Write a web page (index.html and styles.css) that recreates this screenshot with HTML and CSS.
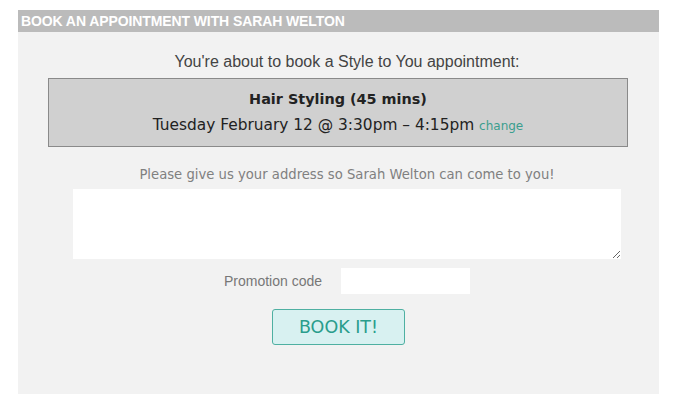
FILE: index.html
```html
<!DOCTYPE html>
<html>
<head>
<meta charset="utf-8">
<link rel="stylesheet" href="styles.css">
</head>
<body>
<div class="panel">
  <div class="header">BOOK AN APPOINTMENT WITH SARAH WELTON</div>
  <div class="content">
    <p class="intro">You're about to book a Style to You appointment:</p>
    <div class="summary">
      <div class="service">Hair Styling (45 mins)</div>
      <div class="when">Tuesday February 12 @ 3:30pm – 4:15pm <a class="change" href="#">change</a></div>
    </div>
    <p class="address-label">Please give us your address so Sarah Welton can come to you!</p>
    <textarea class="address"></textarea>
    <div class="promo">
      <label class="promo-label">Promotion code</label>
      <input class="promo-input" type="text">
    </div>
    <button class="book">BOOK IT!</button>
  </div>
</div>
</body>
</html>
```
FILE: styles.css
```css
html, body {
  margin: 0;
  padding: 0;
  background: #ffffff;
}
body {
  padding: 10px 0 0 18px;
}
.panel {
  width: 641px;
  background: #f2f2f2;
}
.header {
  height: 22px;
  line-height: 22px;
  background: #bbbbbb;
  color: #ffffff;
  font-family: "Liberation Sans", Arial, sans-serif;
  font-weight: bold;
  font-size: 14px;
  letter-spacing: -0.1px;
  padding-left: 3px;
}
.content {
  display: flex;
  flex-direction: column;
  align-items: center;
  padding: 20px 0 49px;
}
.intro {
  margin: 0;
  padding-left: 17px;
  font-family: "Liberation Sans", Arial, sans-serif;
  font-size: 16px;
  line-height: 20px;
  color: #444444;
}
.summary {
  margin-top: 6px;
  width: 578px;
  margin-left: -1px;
  background: #d0d0d0;
  border: 1px solid #8a8a8a;
  padding: 9px 0;
  text-align: center;
  font-family: "DejaVu Sans", sans-serif;
  color: #222222;
}
.service {
  font-weight: bold;
  font-size: 14.4px;
  line-height: 22px;
  margin-bottom: 4px;
}
.when {
  font-size: 15.4px;
  line-height: 22px;
}
.change {
  color: #3a9e8e;
  font-size: 12px;
  text-decoration: none;
}
.address-label {
  margin: 19px 0 0;
  padding-left: 17px;
  font-family: "DejaVu Sans", sans-serif;
  font-size: 13.2px;
  line-height: 18px;
  color: #808080;
}
.address {
  margin: 5px 0 0;
  align-self: flex-start;
  margin-left: 55px;
  width: 548px;
  height: 70px;
  box-sizing: border-box;
  border: none;
  background: #ffffff;
  outline: none;
  padding: 2px;
}
.promo {
  margin-top: 9px;
  padding-left: 17px;
  display: flex;
  align-items: center;
  gap: 19px;
}
.promo-label {
  font-family: "Liberation Sans", Arial, sans-serif;
  font-size: 14px;
  color: #777777;
}
.promo-input {
  width: 129px;
  height: 26px;
  box-sizing: border-box;
  border: none;
  background: #ffffff;
  outline: none;
  margin: 0;
}
.book {
  margin-top: 15px;
  width: 133px;
  height: 36px;
  box-sizing: border-box;
  background: #d8f1f1;
  border: 1px solid #4fb0a2;
  border-radius: 3px;
  color: #2a9d8c;
  font-family: "DejaVu Sans", sans-serif;
  font-size: 17.5px;
  padding: 0;
}
```
